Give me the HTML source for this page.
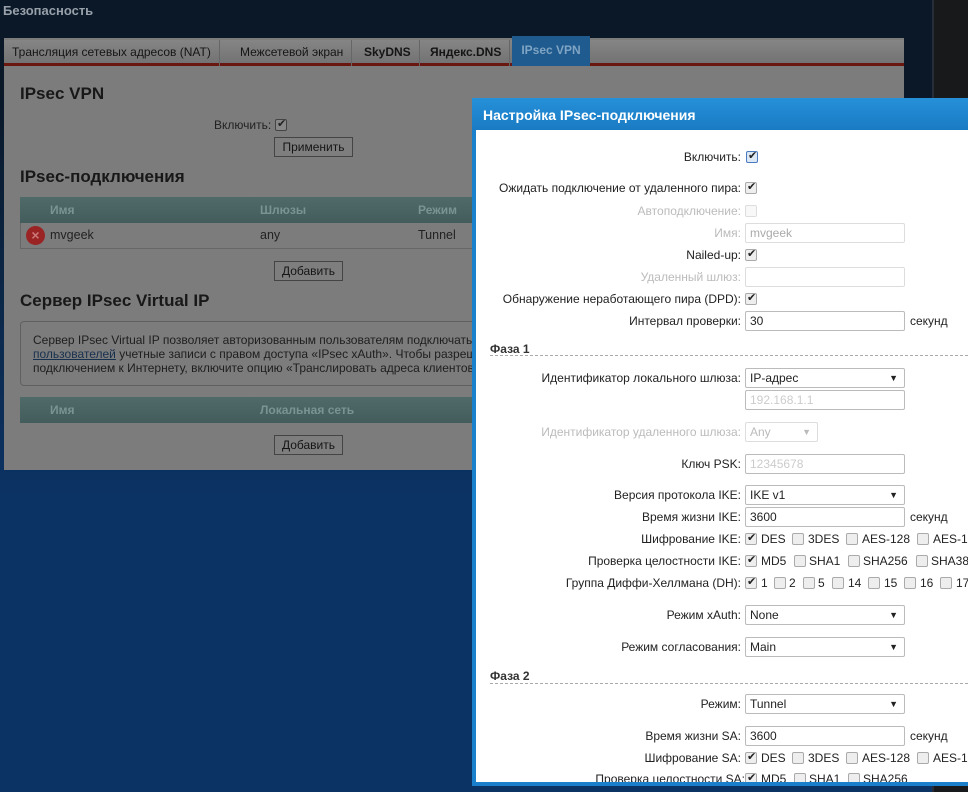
<!DOCTYPE html><html><head><meta charset="utf-8"><style>
*{box-sizing:border-box;margin:0;padding:0}
body{width:968px;height:792px;overflow:hidden;position:relative;font-family:"Liberation Sans",Arial,sans-serif;font-size:12px;background:linear-gradient(#0a1828 0,#0a1828 90px,#0b2748 300px,#0b3364 500px,#0b3364 792px);color:#222}
.a{position:absolute;white-space:nowrap}
.rs{position:absolute;left:932px;top:0;width:36px;height:792px;background:#18191b;border-left:2px solid #262c38}
.panel{position:absolute;left:4px;top:38px;width:900px;height:432px;background:#7c7c7c}
.tabs{position:absolute;left:4px;top:40px;height:26px;width:900px;background:linear-gradient(#858585,#737373);border-bottom:3px solid #6a170f}
.tab{position:absolute;top:0;height:26px;line-height:24px;font-size:12px;color:#151515;border-right:1px solid #666;padding:0 8px}
.h{font-size:17px;font-weight:bold;color:#181818}
.btn{position:absolute;height:20px;border:1px solid #444;background:#7e7e7e;font-size:12px;line-height:18px;text-align:center;color:#151515}
.th{position:absolute;left:20px;width:460px;height:26px;background:linear-gradient(#506a6a,#435c5c);color:#7a9494;font-weight:bold;font-size:12px}
.dlg{position:absolute;left:472px;top:98px;width:496px;height:688px;background:#fff;border-left:4px solid #1a80cc;border-bottom:4px solid #1a80cc}
.tb{position:absolute;left:472px;top:98px;width:496px;height:32px;background:linear-gradient(#2590d8,#1a7bc4);color:#fff;font-weight:bold;font-size:14px;line-height:34px;padding-left:11px}
.l{position:absolute;right:227px;text-align:right;font-size:12px;color:#222;white-space:nowrap}
.g{color:#bbb}
.in{position:absolute;left:745px;width:160px;height:20px;border:1px solid #bbb;border-radius:2px;font-size:12px;padding-left:4px;line-height:18px;color:#222}
.sel:after{content:"▼";position:absolute;right:6px;top:0;font-size:9px}
.cb{position:absolute;width:12px;height:12px;border:1px solid #aaa;border-radius:2px;background:#eee}
.ck:after{content:"✔";position:absolute;left:1px;top:-3px;font-size:11px;color:#222}
.t{position:absolute;font-size:12px;color:#222;white-space:nowrap}
.ph{position:absolute;left:490px;font-weight:bold;font-size:12px;color:#333}
.dash{position:absolute;left:490px;width:478px;border-top:1px dashed #aaa}
</style></head><body>
<div class="rs"></div>
<div class="a" style="left:3px;top:3px;color:#98a0aa;font-weight:bold;font-size:13px">Безопасность</div>
<div class="panel"></div>
<div class="tabs">
<div class="tab" style="left:0">Трансляция сетевых адресов (NAT)</div>
<div class="tab" style="left:228px">Межсетевой экран</div>
<div class="tab" style="left:352px;font-weight:bold">SkyDNS</div>
<div class="tab" style="left:418px;font-weight:bold">Яндекс.DNS</div>
</div>
<div class="a" style="left:512px;top:36px;width:78px;height:30px;background:#1f5b8e;color:#7fa4c4;font-weight:bold;text-align:center;line-height:28px">IPsec VPN</div>
<div class="a h" style="left:20px;top:84px">IPsec VPN</div>
<div class="a" style="left:214px;top:118px;font-size:12px">Включить:</div>
<div class="cb ck" style="left:275px;top:119px;border-color:#444;background:#888"></div>
<div class="btn" style="left:274px;top:137px;width:79px">Применить</div>
<div class="a h" style="left:20px;top:167px">IPsec-подключения</div>
<div class="th" style="top:197px"><span class="a" style="left:30px;top:6px">Имя</span><span class="a" style="left:240px;top:6px">Шлюзы</span><span class="a" style="left:398px;top:6px">Режим</span></div>
<div class="a" style="left:20px;top:223px;width:460px;height:26px;border:1px solid #666;border-top:0"></div>
<div class="a" style="left:26px;top:226px;width:19px;height:19px;border-radius:50%;background:#9a2424;color:#c77;font-weight:bold;text-align:center;line-height:19px;font-size:14px">×</div>
<div class="a" style="left:50px;top:228px;font-size:12.5px">mvgeek</div>
<div class="a" style="left:260px;top:228px;font-size:12.5px">any</div>
<div class="a" style="left:418px;top:228px;font-size:12.5px">Tunnel</div>
<div class="btn" style="left:274px;top:261px;width:69px">Добавить</div>
<div class="a h" style="left:20px;top:291px">Сервер IPsec Virtual IP</div>
<div class="a" style="left:20px;top:321px;width:470px;height:65px;border:1px solid #606060;border-radius:4px;font-size:12px;line-height:14px;padding:11px 12px;color:#1e1e1e;overflow:hidden">Сервер IPsec Virtual IP позволяет авторизованным пользователям подключаться<br><u style="color:#17304e">пользователей</u> учетные записи с правом доступа «IPsec xAuth». Чтобы разрешить<br>подключением к Интернету, включите опцию «Транслировать адреса клиентов»</div>
<div class="th" style="top:397px"><span class="a" style="left:30px;top:6px">Имя</span><span class="a" style="left:240px;top:6px">Локальная сеть</span></div>
<div class="btn" style="left:274px;top:435px;width:69px">Добавить</div>

<div class="dlg"></div>
<div class="tb">Настройка IPsec-подключения</div>

<div class="l" style="top:150px">Включить:</div><div class="cb ck" style="left:746px;top:151px;border-color:#4a7ac0;background:#dde8f5"></div>
<div class="l" style="top:181px">Ожидать подключение от удаленного пира:</div><div class="cb ck" style="left:745px;top:182px"></div>
<div class="l g" style="top:204px">Автоподключение:</div><div class="cb" style="left:745px;top:205px;border-color:#ddd;background:#f8f8f8"></div>
<div class="l g" style="top:226px">Имя:</div><div class="in" style="top:223px;color:#aaa;border-color:#ddd">mvgeek</div>
<div class="l" style="top:248px">Nailed-up:</div><div class="cb ck" style="left:745px;top:249px"></div>
<div class="l g" style="top:270px">Удаленный шлюз:</div><div class="in" style="top:267px;border-color:#ddd"></div>
<div class="l" style="top:292px">Обнаружение неработающего пира (DPD):</div><div class="cb ck" style="left:745px;top:293px"></div>
<div class="l" style="top:314px">Интервал проверки:</div><div class="in" style="top:311px">30</div><div class="t" style="left:910px;top:314px">секунд</div>
<div class="ph" style="top:342px">Фаза 1</div><div class="dash" style="top:355px"></div>
<div class="l" style="top:371px">Идентификатор локального шлюза:</div><div class="in sel" style="top:368px">IP-адрес</div>
<div class="in" style="top:390px;color:#ccc">192.168.1.1</div>
<div class="l g" style="top:425px">Идентификатор удаленного шлюза:</div><div class="in sel" style="top:422px;width:73px;color:#bbb;border-color:#ddd">Any</div>
<div class="l" style="top:457px">Ключ PSK:</div><div class="in" style="top:454px;color:#ccc">12345678</div>
<div class="l" style="top:488px">Версия протокола IKE:</div><div class="in sel" style="top:485px">IKE v1</div>
<div class="l" style="top:510px">Время жизни IKE:</div><div class="in" style="top:507px">3600</div><div class="t" style="left:910px;top:510px">секунд</div>
<div class="l" style="top:532px">Шифрование IKE:</div>
<div class="cb ck" style="left:745px;top:533px"></div><div class="t" style="left:761px;top:532px">DES</div>
<div class="cb" style="left:792px;top:533px"></div><div class="t" style="left:808px;top:532px">3DES</div>
<div class="cb" style="left:846px;top:533px"></div><div class="t" style="left:862px;top:532px">AES-128</div>
<div class="cb" style="left:917px;top:533px"></div><div class="t" style="left:933px;top:532px">AES-192</div>
<div class="l" style="top:554px">Проверка целостности IKE:</div>
<div class="cb ck" style="left:745px;top:555px"></div><div class="t" style="left:761px;top:554px">MD5</div>
<div class="cb" style="left:794px;top:555px"></div><div class="t" style="left:809px;top:554px">SHA1</div>
<div class="cb" style="left:848px;top:555px"></div><div class="t" style="left:863px;top:554px">SHA256</div>
<div class="cb" style="left:916px;top:555px"></div><div class="t" style="left:931px;top:554px">SHA384</div>
<div class="l" style="top:576px">Группа Диффи-Хеллмана (DH):</div>
<div class="cb ck" style="left:745px;top:577px"></div><div class="t" style="left:761px;top:576px">1</div>
<div class="cb" style="left:774px;top:577px"></div><div class="t" style="left:789px;top:576px">2</div>
<div class="cb" style="left:803px;top:577px"></div><div class="t" style="left:818px;top:576px">5</div>
<div class="cb" style="left:832px;top:577px"></div><div class="t" style="left:848px;top:576px">14</div>
<div class="cb" style="left:868px;top:577px"></div><div class="t" style="left:884px;top:576px">15</div>
<div class="cb" style="left:904px;top:577px"></div><div class="t" style="left:920px;top:576px">16</div>
<div class="cb" style="left:940px;top:577px"></div><div class="t" style="left:956px;top:576px">17</div>
<div class="l" style="top:608px">Режим xAuth:</div><div class="in sel" style="top:605px">None</div>
<div class="l" style="top:640px">Режим согласования:</div><div class="in sel" style="top:637px">Main</div>
<div class="ph" style="top:669px">Фаза 2</div><div class="dash" style="top:683px"></div>
<div class="l" style="top:697px">Режим:</div><div class="in sel" style="top:694px">Tunnel</div>
<div class="l" style="top:729px">Время жизни SA:</div><div class="in" style="top:726px">3600</div><div class="t" style="left:910px;top:729px">секунд</div>
<div class="l" style="top:751px">Шифрование SA:</div>
<div class="cb ck" style="left:745px;top:752px"></div><div class="t" style="left:761px;top:751px">DES</div>
<div class="cb" style="left:792px;top:752px"></div><div class="t" style="left:808px;top:751px">3DES</div>
<div class="cb" style="left:846px;top:752px"></div><div class="t" style="left:862px;top:751px">AES-128</div>
<div class="cb" style="left:917px;top:752px"></div><div class="t" style="left:933px;top:751px">AES-192</div>
<div class="a" style="left:476px;top:770px;width:492px;height:12px;overflow:hidden">
<div class="l" style="top:2px;right:223px">Проверка целостности SA:</div>
<div class="cb ck" style="left:269px;top:3px"></div><div class="t" style="left:285px;top:2px">MD5</div>
<div class="cb" style="left:318px;top:3px"></div><div class="t" style="left:333px;top:2px">SHA1</div>
<div class="cb" style="left:372px;top:3px"></div><div class="t" style="left:387px;top:2px">SHA256</div>
</div>
<div class="a" style="left:472px;top:782px;width:496px;height:4px;background:#1a80cc"></div>
</body></html>
